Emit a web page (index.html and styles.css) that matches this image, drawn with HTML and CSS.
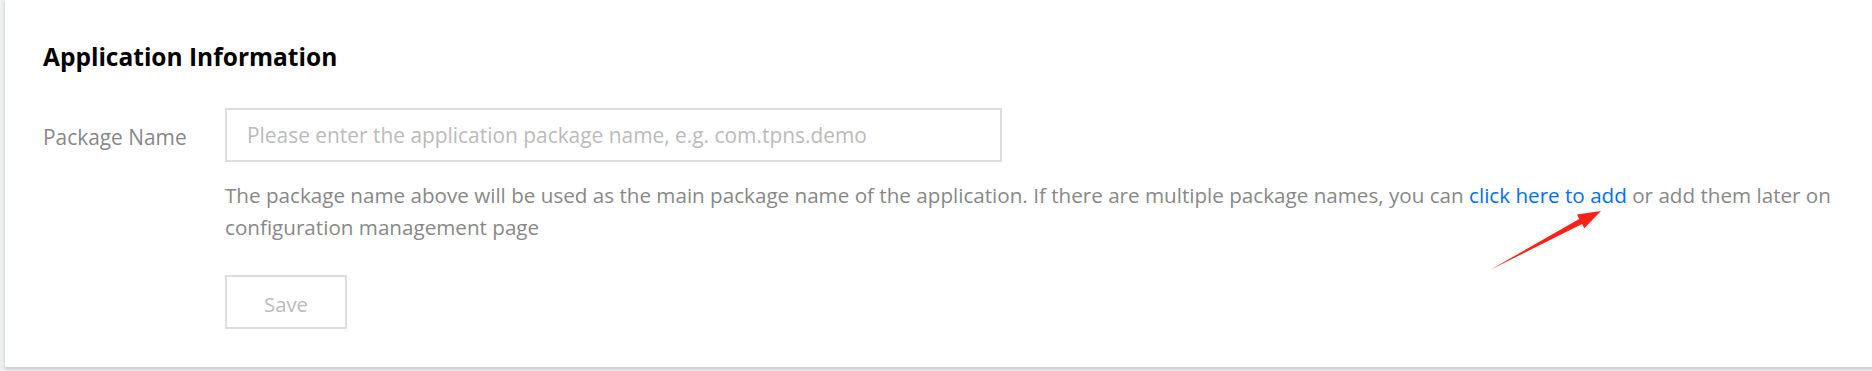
FILE: index.html
```html
<!DOCTYPE html>
<html lang="en">
<head>
    <meta charset="UTF-8">
    <meta name="viewport" content="width=device-width, initial-scale=1.0">
    <title>Application Information</title>
    <link rel="stylesheet" href="styles.css">
</head>
<body>
    <div class="card">
        <h2>Application Information</h2>
        <form class="app-form">
            <div class="form-row">
                <label for="packageName">Package Name</label>
                <div class="form-field">
                    <input type="text" id="packageName" name="packageName" placeholder="Please enter the application package name, e.g. com.tpns.demo">
                    <p class="help-text">The package name above will be used as the main package name of the application. If there are multiple package names, you can <a href="#">click here to add</a> or add them later on configuration management page</p>
                    <button type="button" class="save-button" disabled>Save</button>
                </div>
            </div>
        </form>
        <!-- annotation arrow -->
        <svg class="arrow" width="130" height="80" viewBox="0 0 130 80">
            <polygon points="10,70 99.2,19 97,14.6 121,11 104.3,28.2 102.1,23.9" fill="#ff2117"/>
        </svg>
    </div>
</body>
</html>
```
FILE: styles.css
```css
body {
    font-family: "Open Sans", "Noto Sans", sans-serif;
    background-color: #eeeff1;
    margin: 0;
    padding: 0 0 4px 5px;
    overflow: hidden;
}
.card {
    position: relative;
    min-width: 1900px;
    background: #fff;
    padding: 41px 38px 38px;
    box-shadow: 0 2px 3px rgba(0, 0, 0, 0.18);
}
h2 {
    margin: 0 0 35px;
    font-size: 24.5px;
    font-weight: 700;
    line-height: 32px;
    color: #000;
}
.form-row {
    display: flex;
    align-items: flex-start;
}
label {
    flex: 0 0 182px;
    font-size: 20.9px;
    line-height: 28px;
    color: #888;
    margin-top: 15px;
}
.form-field {
    flex: 1;
}
input {
    display: block;
    box-sizing: border-box;
    width: 777px;
    height: 54px;
    padding: 0 20px;
    border: 2px solid #dddddd;
    font-family: inherit;
    font-size: 20.9px;
    color: #333;
    outline: none;
}
input::placeholder {
    color: #bbbbbb;
}
.help-text {
    max-width: 1660px;
    margin: 17px 0 32px;
    font-size: 20.64px;
    line-height: 32px;
    color: #888;
}
.help-text a {
    color: #006eff;
    text-decoration: none;
}
.save-button {
    display: block;
    box-sizing: border-box;
    width: 122px;
    height: 54px;
    background: #fff;
    border: 2px solid #dddddd;
    font-family: inherit;
    font-size: 20.3px;
    color: #bbbbbb;
    padding: 3px 0 0;
}
.arrow {
    position: absolute;
    left: 1475px;
    top: 200px;
}
```
